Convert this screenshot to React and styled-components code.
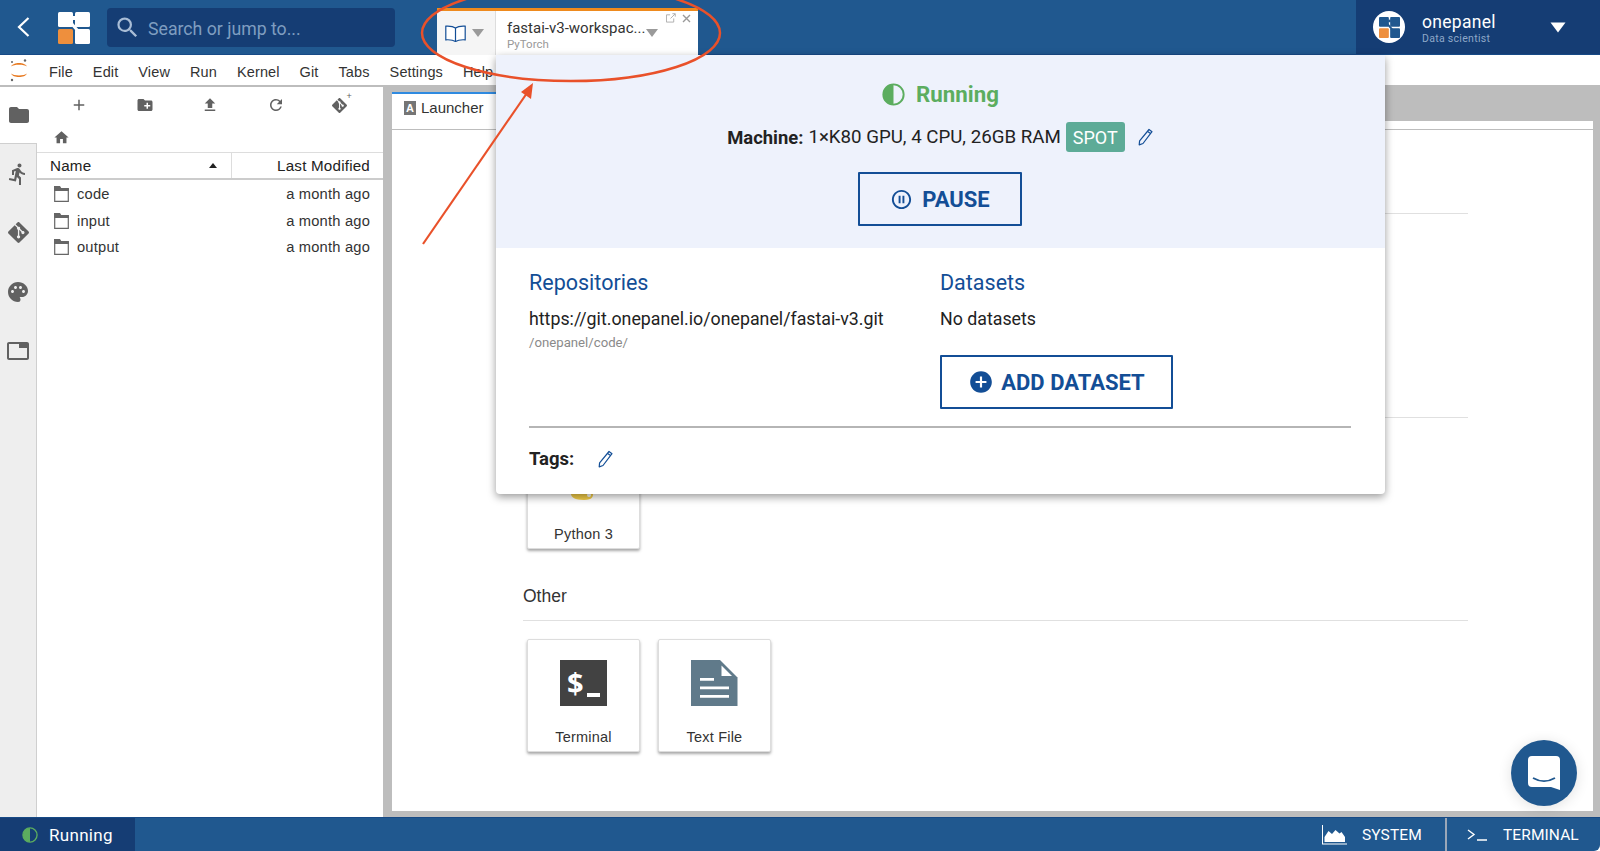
import React from "react";
import styled, { createGlobalStyle } from "styled-components";
import { MdAdd, MdAddCircle, MdCreateNewFolder, MdFileUpload, MdFolder, MdHome, MdPalette, MdPauseCircleOutline, MdRefresh, MdSearch, MdTab, MdDirectionsRun } from "react-icons/md";
import { SiGit } from "react-icons/si";

const GlobalStyle = createGlobalStyle`
  html, body {
    margin: 0;
    padding: 0;
    background: #fff;
  }
  * {
    box-sizing: border-box;
  }
`;

const Page = styled.div`
  position: relative;
  width: 1600px;
  height: 851px;
  overflow: hidden;
  display: flex;
  flex-direction: column;
  font-family: "Liberation Sans", Arial, sans-serif;
  color: #222;
`;

const TopBar = styled.header`
  flex: 0 0 55px;
  display: flex;
  background: #20588f;
  border-bottom: 1px solid #174a86;
`;

const BackButton = styled.div`
  width: 58px;
  padding: 17px 0 0 17px;
`;

const LogoBox = styled.div`
  width: 49px;
  padding-top: 12px;
`;

const SearchBox = styled.div`
  width: 288px;
  height: 39px;
  margin-top: 8px;
  padding-left: 7px;
  display: flex;
  align-items: center;
  gap: 7px;
  border-radius: 4px;
  background: #153d74;
  color: #7f9dc0;
  font: 17.7px Roboto, sans-serif;
`;

const SearchText = styled.span`
  margin-top: 2px;
`;

const TabGroup = styled.div`
  margin: 8px 0 -1px 42px;
  width: 261px;
  display: flex;
  border-top: 3px solid #ee8a1e;
  background: #fff;
`;

const BookTab = styled.div`
  width: 59px;
  padding-left: 8px;
  display: flex;
  align-items: center;
  gap: 6px;
  background: #f5f5f5;
  border-right: 1px solid #ddd;
`;

const Caret = styled.span`
  display: inline-block;
  border-left: 6px solid transparent;
  border-right: 6px solid transparent;
  border-top: 8px solid ${(p) => p.$color || "#9a9a9a"};
`;

const WorkspaceTab = styled.div`
  position: relative;
  flex: 1;
  padding: 8px 0 0 11px;
  font-family: Roboto, sans-serif;
`;

const WorkspaceName = styled.div`
  font-size: 15px;
  line-height: 18px;
  color: #333;
  display: flex;
  align-items: flex-end;
  gap: 1px;
`;

const WorkspaceKind = styled.div`
  font-size: 11.5px;
  line-height: 14px;
  color: #999;
`;

const TabActions = styled.div`
  position: absolute;
  top: 2px;
  right: 7px;
  display: flex;
  gap: 6px;
  align-items: center;
  color: #aaa;
`;

const UserBlock = styled.div`
  margin-left: auto;
  width: 244px;
  padding: 0 34px 0 17px;
  display: flex;
  align-items: center;
  background: #153d74;
`;

const Avatar = styled.div`
  width: 32px;
  height: 32px;
  border-radius: 50%;
  background: #fff;
  display: flex;
  align-items: center;
  justify-content: center;
`;

const UserText = styled.div`
  margin-left: 17px;
  padding-top: 3px;
  flex: 1;
  font-family: Roboto, sans-serif;
`;

const UserName = styled.div`
  font-size: 17.5px;
  line-height: 20px;
  letter-spacing: 0.3px;
  color: #fff;
`;

const UserRole = styled.div`
  font-size: 10.5px;
  line-height: 12px;
  margin-top: 1px;
  letter-spacing: 0.3px;
  color: #8ea8c8;
`;

const MenuBar = styled.nav`
  flex: 0 0 32px;
  display: flex;
  align-items: center;
  padding: 3px 0 0 9px;
  gap: 20px;
  border-bottom: 2px solid #bdbdbd;
  font-size: 14.5px;
  letter-spacing: 0.12px;
  color: #333;
`;

const JupyterMark = styled.div`
  width: 20px;
  margin-top: -3px;
  display: flex;
`;

const Body = styled.div`
  flex: 1;
  min-height: 0;
  display: flex;
`;

const SideTabs = styled.aside`
  flex: 0 0 37px;
  display: flex;
  flex-direction: column;
  background: #eee;
  border-right: 1px solid #cfcfcf;
`;

const SideTab = styled.div`
  height: ${(p) => (p.$active ? 57 : 59)}px;
  display: flex;
  align-items: center;
  justify-content: center;
  color: #616161;
  font-size: ${(p) => p.$size || 24}px;
  background: ${(p) => (p.$active ? "#fff" : "transparent")};
  ${(p) => (p.$active ? "margin-right: -1px; border-bottom: 1px solid #cfcfcf;" : "")}
`;

const FilePanel = styled.section`
  flex: 0 0 346px;
  background: #fff;
  font-size: 14.7px;
  letter-spacing: 0.2px;
`;

const FileToolbar = styled.div`
  height: 36px;
  padding: 0 0 0 33px;
  display: flex;
  align-items: center;
  gap: 47.5px;
  color: #616161;
  font-size: 18px;
`;

const CloneIcon = styled.span`
  position: relative;
  display: flex;
  font-size: 15px;

  &::after {
    content: "+";
    position: absolute;
    right: -5px;
    top: -6px;
    font-size: 9px;
    line-height: 9px;
    color: #616161;
  }
`;

const Crumbs = styled.div`
  height: 29px;
  padding-left: 16px;
  display: flex;
  align-items: center;
  color: #616161;
  font-size: 17px;
`;

const FileHead = styled.div`
  height: 28px;
  display: flex;
  border-top: 1px solid #ddd;
  border-bottom: 2px solid #ccc;
  font-size: 15.2px;
`;

const NameHead = styled.div`
  width: 195px;
  padding: 0 14px 0 13px;
  display: flex;
  align-items: center;
  justify-content: space-between;
  border-right: 1px solid #ddd;
  color: #222;
`;

const ModifiedHead = styled.div`
  flex: 1;
  padding-right: 13px;
  display: flex;
  align-items: center;
  justify-content: flex-end;
`;

const SortCaret = styled.span`
  border-left: 4px solid transparent;
  border-right: 4px solid transparent;
  border-bottom: 5px solid #222;
`;

const FileRows = styled.div`
  padding-top: 1px;
`;

const FileRow = styled.div`
  height: 26.5px;
  padding: 0 13px 0 17px;
  display: flex;
  align-items: center;
  gap: 8px;
  color: #333;
`;

const FileName = styled.span`
  flex: 1;
`;

const Gutter = styled.div`
  flex: 0 0 9px;
  background: #bdbdbd;
`;

const MainArea = styled.main`
  flex: 1;
  min-width: 0;
  display: flex;
  flex-direction: column;
  background: #bdbdbd;
  padding: 0 7px 6px 0;
`;

const TabStrip = styled.div`
  flex: 0 0 43px;
  display: flex;
  align-items: flex-end;
  position: relative;
  background: linear-gradient(#bdbdbd 34px, #fff 34px);
  border-bottom: 1px solid #bdbdbd;
`;

const LauncherTab = styled.div`
  width: 130px;
  height: 37px;
  padding: 0 0 8px 12px;
  display: flex;
  align-items: center;
  gap: 5px;
  background: #fff;
  border-top: 2px solid #2f8ae0;
  font-size: 15px;
  color: #333;
`;

const TabIcon = styled.span`
  width: 12px;
  height: 14px;
  display: flex;
  align-items: center;
  justify-content: center;
  background: #757575;
  color: #fff;
  font-size: 11px;
  font-weight: bold;
`;

const Launcher = styled.div`
  flex: 1;
  padding: 47px 125px 0 131px;
  background: #fff;
`;

const Section = styled.section`
  margin-bottom: 35.5px;
`;

const SectionTitle = styled.h3`
  margin: 0;
  height: 37px;
  border-bottom: 1px solid #e0e0e0;
  font-size: 17.5px;
  line-height: 24px;
  font-weight: normal;
  color: #333;
`;

const Cards = styled.div`
  display: flex;
  gap: 18px;
  margin: 18px 0 0 4px;
`;

const Card = styled.div`
  width: 113px;
  height: 113px;
  padding-top: 20px;
  display: flex;
  flex-direction: column;
  align-items: center;
  background: #fff;
  border: 1px solid #ddd;
  border-radius: 2px;
  box-shadow: 0 2px 3px rgba(0, 0, 0, 0.35);
`;

const CardIcon = styled.div`
  height: 46px;
`;

const CardLabel = styled.div`
  margin-top: 22px;
  font-size: 14.5px;
  line-height: 18px;
  letter-spacing: 0.2px;
  color: #333;
`;

const TerminalGlyph = styled.div`
  width: 47px;
  height: 46px;
  padding-left: 7px;
  display: flex;
  align-items: center;
  gap: 3px;
  background: #424242;
  color: #fff;
  font: bold 29px/46px "Open Sans", sans-serif;
`;

const Underscore = styled.span`
  width: 13px;
  height: 4px;
  margin-top: 24px;
  background: #fff;
`;

const Chat = styled.div`
  position: absolute;
  left: 1511px;
  top: 740px;
  width: 66px;
  height: 66px;
  border-radius: 50%;
  display: flex;
  align-items: center;
  justify-content: center;
  background: #20588f;
  box-shadow: 0 2px 14px rgba(0, 0, 0, 0.12);
`;

const StatusBar = styled.footer`
  flex: 0 0 34px;
  display: flex;
  align-items: stretch;
  background: #20588f;
  border-top: 1px solid #174a86;
  border-radius: 0 0 6px 6px;
  color: #fff;
  font-family: Roboto, sans-serif;
`;

const StatusRun = styled.div`
  width: 135px;
  padding-left: 22px;
  display: flex;
  align-items: center;
  gap: 11px;
  background: #153d74;
  font-size: 17px;
  letter-spacing: 0.3px;
`;

const StatusItem = styled.div`
  display: flex;
  align-items: center;
  font-size: 15.5px;
  letter-spacing: 0.1px;
  ${(p) => (p.$first ? "margin-left: auto; width: 124px; padding-left: 1px; gap: 15px;" : "width: 155px; padding-left: 20px; gap: 16px; border-left: 2px solid #9aa7b8;")}
`;

const Popup = styled.div`
  position: absolute;
  left: 496px;
  top: 55px;
  width: 889px;
  height: 439px;
  background: #fff;
  border-radius: 0 0 4px 4px;
  box-shadow: 0 3px 9px rgba(0, 0, 0, 0.4);
  font-family: Roboto, sans-serif;
`;

const PopupHead = styled.div`
  height: 193px;
  padding-top: 23px;
  display: flex;
  flex-direction: column;
  align-items: center;
  background: #eef2fc;
`;

const RunState = styled.div`
  display: flex;
  align-items: center;
  gap: 11px;
  height: 32px;
  font-size: 22.3px;
  font-weight: 700;
  color: #5cad5f;
`;

const MachineRow = styled.div`
  margin-top: 12px;
  height: 30px;
  display: flex;
  align-items: center;
  font-size: 18.7px;
  color: #222;
`;

const Strong = styled.b`
  font-weight: 700;
  font-size: 18.4px;
  margin-right: 5px;
`;

const Spot = styled.span`
  margin: 0 0 0 5px;
  width: 59px;
  height: 30px;
  border-radius: 3px;
  display: flex;
  align-items: center;
  justify-content: center;
  background: #5dab97;
  color: #fff;
  font-size: 18px;
`;

const PencilButton = styled.span`
  display: flex;
  margin-left: ${(p) => p.$gap}px;
`;

const OutlineButton = styled.div`
  display: flex;
  align-items: center;
  justify-content: center;
  gap: ${(p) => p.$gap}px;
  width: ${(p) => p.$width}px;
  height: 54px;
  border: 2px solid #134e96;
  border-radius: 1px;
  color: #134e96;
  font-size: 22px;
  font-weight: 700;
`;

const PauseWrap = styled.div`
  margin: 20px 1px 0 0;
`;

const PopupBody = styled.div`
  padding: 23px 34px 0 33px;
`;

const Columns = styled.div`
  height: 157px;
  display: grid;
  grid-template-columns: 411px 1fr;
  border-bottom: 2px solid #b5b5b5;
`;

const ColumnTitle = styled.h4`
  margin: 0 0 12px;
  font-size: 21.5px;
  line-height: 24px;
  font-weight: 400;
  color: #134e96;
`;

const ColumnText = styled.div`
  font-size: 17.8px;
  line-height: 24px;
  color: #222;
`;

const RepoPath = styled.div`
  margin-top: 4px;
  font-size: 13.2px;
  line-height: 16px;
  color: #8a8a8a;
`;

const AddWrap = styled.div`
  margin-top: 24px;
`;

const TagsRow = styled.div`
  margin-top: 20px;
  display: flex;
  align-items: center;
  font-size: 18.5px;
  font-weight: 700;
  color: #222;
`;

const Annotation = styled.svg`
  position: absolute;
  left: 0;
  top: 0;
  pointer-events: none;
`;

const Logo = ({ size, light }) => {
  const main = light ? "#20588f" : "#fff";
  return (
    <svg width={size} height={size} viewBox="0 0 32 32">
      <rect x="0" y="0" width="15" height="15" rx="1.5" fill={main} />
      <rect x="17" y="0" width="15" height="15" rx="1.5" fill={main} />
      <rect x="0" y="17" width="15" height="15" rx="1.5" fill="#ee8f3d" />
      <rect x="17" y="17" width="15" height="15" rx="1.5" fill={main} />
      <path d="M14 6h4" stroke={main} strokeWidth="4" fill="none" />
      <path d="M13 11l7 8" stroke={main} strokeWidth="3" fill="none" />
    </svg>
  );
};

const HalfCircle = ({ size, stroke = "#5cad5f" }) => (
  <svg width={size} height={size} viewBox="0 0 24 24">
    <circle cx="12" cy="12" r="10.6" fill="none" stroke={stroke} strokeWidth="2" />
    <path d="M12 1.4a10.6 10.6 0 0 0 0 21.2z" fill={stroke} />
  </svg>
);

const Pencil = ({ size = 18 }) => (
  <svg width={size} height={size} viewBox="0 0 18 18" fill="none" stroke="#134e96" strokeWidth="1.2" strokeLinejoin="round">
    <path d="M13 1.5l3 2.2-9 11.8-3.8 1.4.4-4z" />
    <path d="M11.6 3.4l3 2.2" />
  </svg>
);

const FolderOutline = () => (
  <svg width="15" height="16" viewBox="0 0 15 16" fill="none">
    <path d="M.7 2.5h13.6v12.8H.7z" fill="#fff" stroke="#666" strokeWidth="1.2" />
    <path d="M0 0h6l1.5 2.5H15V5H0z" fill="#666" />
  </svg>
);

const JupyterLogo = () => (
  <svg width="20" height="24" viewBox="0 0 20 24">
    <path d="M2 8.5C4 3.8 16 3.8 18 8.5 15.5 6 4.5 6 2 8.5z" fill="#e8791f" />
    <path d="M2 15.5C4 20.2 16 20.2 18 15.5 15.5 18 4.5 18 2 15.5z" fill="#e8791f" />
    <circle cx="16" cy="2.5" r="1.2" fill="#666" />
    <circle cx="3" cy="4" r="1" fill="#666" />
    <circle cx="3" cy="22" r="1.2" fill="#666" />
  </svg>
);

const PythonLogo = () => (
  <svg width="46" height="46" viewBox="0 0 46 46">
    <path d="M23 3c-9 0-9 4-9 6v4h10v2H9c-5 0-7 4-7 9s2 9 7 9h5v-6c0-4 3-7 7-7h9c3 0 6-2 6-6V9c0-3-4-6-13-6z" fill="#3a76a8" />
    <path d="M23 43c9 0 9-4 9-6v-4H22v-2h15c5 0 7-4 7-9s-2-9-7-9h-5v6c0 4-3 7-7 7h-9c-3 0-6 2-6 6v5c0 3 4 6 13 6z" fill="#f5cf4a" />
    <circle cx="28" cy="38" r="2" fill="#fff" />
  </svg>
);

const NotebookLogo = () => (
  <svg width="46" height="46" viewBox="0 0 46 46">
    <rect width="46" height="46" fill="#ef6c00" />
  </svg>
);

const TextFileLogo = () => (
  <svg width="47" height="46" viewBox="0 0 47 46">
    <path d="M0 0h29l17.5 17.6V46H0z" fill="#607a8a" />
    <path d="M30.5 5.5L41 16H30.5z" fill="#fff" />
    <path d="M9 18h14v2.7H9zM9 26.5h29v2.7H9zM9 35h29v2.7H9z" fill="#fff" />
  </svg>
);

const menuItems = ["File", "Edit", "View", "Run", "Kernel", "Git", "Tabs", "Settings", "Help"];
const files = ["code", "input", "output"];

const App = () => {
  return (
    <Page>
      <GlobalStyle />
      <TopBar>
        <BackButton>
          <svg width="13" height="20" viewBox="0 0 13 20" fill="none" stroke="#fff" strokeWidth="2.2">
            <path d="M11.5 1L2 10l9.5 9" />
          </svg>
        </BackButton>
        <LogoBox>
          <Logo size={32} />
        </LogoBox>
        <SearchBox>
          <MdSearch size={27} color="#a9bdd6" />
          <SearchText>Search or jump to...</SearchText>
        </SearchBox>
        <TabGroup>
          <BookTab>
            <svg width="21" height="17" viewBox="0 0 21 17" fill="#fff" stroke="#134e96" strokeWidth="1.2">
              <path d="M10.5 3C8 1.2 4 1 .8 1.2v13.6c3.2-.2 7.2 0 9.7 1.6 2.5-1.6 6.5-1.8 9.7-1.6V1.2C17 1 13 1.2 10.5 3z" />
              <path d="M10.5 3v13.4" />
            </svg>
            <Caret />
          </BookTab>
          <WorkspaceTab>
            <WorkspaceName>
              fastai-v3-workspac...
              <Caret />
            </WorkspaceName>
            <WorkspaceKind>PyTorch</WorkspaceKind>
            <TabActions>
              <svg width="10" height="10" viewBox="0 0 11 11" fill="none" stroke="#aaa" strokeWidth="1">
                <path d="M8.5 6v4h-8V2h4M5 6l5-5M7 .8h3.2V4" />
              </svg>
              <svg width="9" height="9" viewBox="0 0 9 9" fill="none" stroke="#999" strokeWidth="1.4">
                <path d="M1 1l7 7M8 1l-7 7" />
              </svg>
            </TabActions>
          </WorkspaceTab>
        </TabGroup>
        <UserBlock>
          <Avatar>
            <Logo size={21} light />
          </Avatar>
          <UserText>
            <UserName>onepanel</UserName>
            <UserRole>Data scientist</UserRole>
          </UserText>
          <svg width="16" height="11" viewBox="0 0 16 11">
            <path d="M.5.5h15L8 10.5z" fill="#fff" />
          </svg>
        </UserBlock>
      </TopBar>

      <MenuBar>
        <JupyterMark>
          <JupyterLogo />
        </JupyterMark>
        {menuItems.map((item) => (
          <span key={item}>{item}</span>
        ))}
      </MenuBar>

      <Body>
        <SideTabs>
          <SideTab $active>
            <MdFolder />
          </SideTab>
          <SideTab>
            <MdDirectionsRun />
          </SideTab>
          <SideTab $size={21}>
            <SiGit />
          </SideTab>
          <SideTab>
            <MdPalette />
          </SideTab>
          <SideTab>
            <MdTab />
          </SideTab>
        </SideTabs>

        <FilePanel>
          <FileToolbar>
            <MdAdd />
            <MdCreateNewFolder />
            <MdFileUpload />
            <MdRefresh />
            <CloneIcon>
              <SiGit />
            </CloneIcon>
          </FileToolbar>
          <Crumbs>
            <MdHome />
          </Crumbs>
          <FileHead>
            <NameHead>
              Name
              <SortCaret />
            </NameHead>
            <ModifiedHead>Last Modified</ModifiedHead>
          </FileHead>
          <FileRows>
            {files.map((name) => (
              <FileRow key={name}>
                <FolderOutline />
                <FileName>{name}</FileName>
                <span>a month ago</span>
              </FileRow>
            ))}
          </FileRows>
        </FilePanel>

        <Gutter />

        <MainArea>
          <TabStrip>
            <LauncherTab>
              <TabIcon>A</TabIcon>
              Launcher
            </LauncherTab>
          </TabStrip>
          <Launcher>
            <Section>
              <SectionTitle>Notebook</SectionTitle>
              <Cards>
                <Card>
                  <CardIcon>
                    <NotebookLogo />
                  </CardIcon>
                </Card>
              </Cards>
            </Section>
            <Section>
              <SectionTitle>Console</SectionTitle>
              <Cards>
                <Card>
                  <CardIcon>
                    <PythonLogo />
                  </CardIcon>
                  <CardLabel>Python 3</CardLabel>
                </Card>
              </Cards>
            </Section>
            <Section>
              <SectionTitle>Other</SectionTitle>
              <Cards>
                <Card>
                  <CardIcon>
                    <TerminalGlyph>
                      $<Underscore />
                    </TerminalGlyph>
                  </CardIcon>
                  <CardLabel>Terminal</CardLabel>
                </Card>
                <Card>
                  <CardIcon>
                    <TextFileLogo />
                  </CardIcon>
                  <CardLabel>Text File</CardLabel>
                </Card>
              </Cards>
            </Section>
          </Launcher>
        </MainArea>
      </Body>

      <StatusBar>
        <StatusRun>
          <HalfCircle size={16} />
          Running
        </StatusRun>
        <StatusItem $first>
          <svg width="25" height="20" viewBox="0 0 25 20" fill="#fff">
            <path d="M1 0v18.6h24v1H0V0z" />
            <path d="M2.5 17V12l4-6 3.5 3 3.5-4 4 3.5 2-1.5 3.5 5v5z" />
          </svg>
          SYSTEM
        </StatusItem>
        <StatusItem>
          <svg width="20" height="12" viewBox="0 0 20 12" fill="none" stroke="#fff" strokeWidth="1.4">
            <path d="M1 1l6 4.5L1 10M10 11h10" />
          </svg>
          TERMINAL
        </StatusItem>
      </StatusBar>

      <Popup>
        <PopupHead>
          <RunState>
            <HalfCircle size={23} />
            Running
          </RunState>
          <MachineRow>
            <Strong>Machine:</Strong> 1×K80 GPU, 4 CPU, 26GB RAM
            <Spot>SPOT</Spot>
            <PencilButton $gap={11}>
              <Pencil />
            </PencilButton>
          </MachineRow>
          <PauseWrap>
            <OutlineButton $width={164} $gap={9}>
              <MdPauseCircleOutline size={23} />
              PAUSE
            </OutlineButton>
          </PauseWrap>
        </PopupHead>
        <PopupBody>
          <Columns>
            <div>
              <ColumnTitle>Repositories</ColumnTitle>
              <ColumnText>https://git.onepanel.io/onepanel/fastai-v3.git</ColumnText>
              <RepoPath>/onepanel/code/</RepoPath>
            </div>
            <div>
              <ColumnTitle>Datasets</ColumnTitle>
              <ColumnText>No datasets</ColumnText>
              <AddWrap>
                <OutlineButton $width={233} $gap={7}>
                  <MdAddCircle size={26} />
                  ADD DATASET
                </OutlineButton>
              </AddWrap>
            </div>
          </Columns>
          <TagsRow>
            Tags:
            <PencilButton $gap={22}>
              <Pencil />
            </PencilButton>
          </TagsRow>
        </PopupBody>
      </Popup>

      <Chat>
        <svg width="34" height="36" viewBox="0 0 34 36">
          <path d="M5 1h24a4 4 0 0 1 4 4v30l-9-3H5a4 4 0 0 1-4-4V5a4 4 0 0 1 4-4z" fill="#fff" />
          <path d="M6 23c7 4 15 4 22 0" fill="none" stroke="#20588f" strokeWidth="1.8" />
        </svg>
      </Chat>

      <Annotation width="1600" height="851" viewBox="0 0 1600 851">
        <ellipse cx="571" cy="33" rx="149" ry="48" fill="none" stroke="#e9512a" strokeWidth="2.5" />
        <path d="M423 244L527 93" stroke="#e9512a" strokeWidth="2.2" />
        <path d="M533 83L521 92l10 7z" fill="#e9512a" />
      </Annotation>
    </Page>
  );
};

export default App;
